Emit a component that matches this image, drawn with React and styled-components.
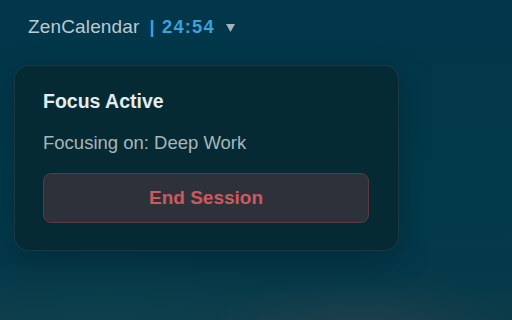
import React from "react";
import styled, { createGlobalStyle } from "styled-components";

const Global = createGlobalStyle`
  html, body { margin: 0; padding: 0; height: 100%; }
  body {
    font-family: "Liberation Sans", Arial, sans-serif;
    background:
      radial-gradient(ellipse 45% 22% at 70% 102%, rgba(60, 70, 80, 0.4), transparent 70%),
      radial-gradient(ellipse 60% 30% at 20% 100%, rgba(20, 75, 85, 0.3), transparent 70%),
      linear-gradient(180deg, #02364a 0%, #023a4a 60%, #04394a 82%, #0b3b48 100%);
    overflow: hidden;
  }
  #root { min-height: 100vh; }
`;

const Page = styled.div`
  display: flex;
  flex-direction: column;
  align-items: flex-start;
  padding: 16px 0 0 14px;
`;

const Header = styled.div`
  display: flex;
  align-items: center;
  padding-left: 14px;
  height: 22px;
  line-height: 22px;
`;

const Brand = styled.span`
  font-size: 19px;
  color: #bccad0;
  letter-spacing: 0.15px;
`;

const Timer = styled.span`
  margin-left: 10px;
  font-size: 18.3px;
  font-weight: 700;
  color: #3aa2dc;
  letter-spacing: 1.2px;
`;

const Caret = styled.svg`
  margin-left: 11px;
  margin-top: 1px;
  width: 9px;
  height: 8px;
  fill: #a2b3ba;
`;

const Card = styled.section`
  margin-top: 27px;
  width: 385px;
  box-sizing: border-box;
  padding: 24px 29px 27px 28px;
  border-radius: 15px;
  background: rgba(8, 38, 46, 0.78);
  border: 1px solid rgba(40, 70, 78, 0.55);
  box-shadow: 0 10px 30px rgba(0, 20, 28, 0.35);
  display: flex;
  flex-direction: column;
`;

const Title = styled.h2`
  margin: 0;
  font-size: 19.5px;
  font-weight: 700;
  color: #e4ecee;
  line-height: 22px;
`;

const Subtitle = styled.p`
  margin: 20px 0 0;
  font-size: 18.5px;
  color: #a6b6bb;
  line-height: 21px;
`;

const EndButton = styled.button`
  margin-top: 20px;
  height: 50px;
  width: 100%;
  border-radius: 8px;
  background: #2d323a;
  border: 1px solid #5b3a40;
  color: #cc595e;
  font-family: "Liberation Sans", Arial, sans-serif;
  font-size: 19px;
  font-weight: 700;
  padding-bottom: 2px;
  cursor: pointer;
`;

export default function App() {
  return (
    <>
      <Global />
      <Page>
        <Header>
          <Brand>ZenCalendar</Brand>
          <Timer>| 24:54</Timer>
          <Caret viewBox="0 0 9 8">
            <polygon points="0,0 9,0 4.5,8" />
          </Caret>
        </Header>
        <Card>
          <Title>Focus Active</Title>
          <Subtitle>Focusing on: Deep Work</Subtitle>
          <EndButton>End Session</EndButton>
        </Card>
      </Page>
    </>
  );
}
